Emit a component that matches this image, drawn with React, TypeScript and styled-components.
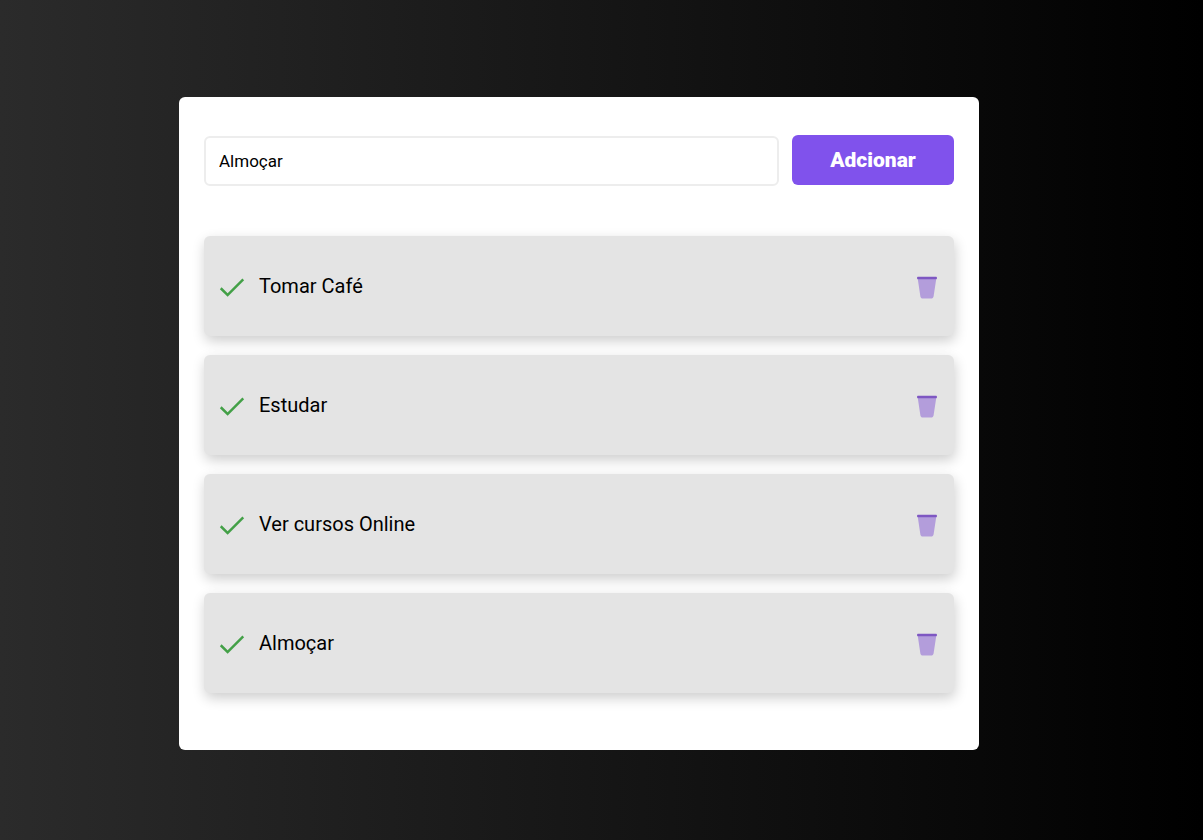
import React, { useState } from 'react';
import styled, { createGlobalStyle } from 'styled-components';
import { FcCheckmark, FcEmptyTrash } from 'react-icons/fc';

const GlobalStyle = createGlobalStyle`
  * {
    box-sizing: border-box;
    margin: 0;
    padding: 0;
  }

  body {
    font-family: Roboto, 'Liberation Sans', sans-serif;
    color: #000000;
  }
`;

const Page = styled.main`
  min-height: 100vh;
  display: flex;
  align-items: center;
  justify-content: center;
  padding: 32px 69px 25px 24px;
  background: linear-gradient(90deg, #2b2b2b 0%, #000000 100%);
`;

const Card = styled.section`
  width: 100%;
  max-width: 800px;
  padding: 38px 25px 57px;
  border-radius: 6px;
  background: #ffffff;
`;

const TaskForm = styled.form`
  display: flex;
  align-items: baseline;
  gap: 13px;
  margin-bottom: 50px;
`;

const TaskInput = styled.input`
  flex: 1;
  min-width: 0;
  height: 50px;
  padding: 0 13px;
  border: 2px solid #ededed;
  border-radius: 6px;
  outline: none;
  background: #ffffff;
  color: #000000;
  font-family: inherit;
  font-size: 17px;
`;

const AddButton = styled.button`
  width: 162px;
  height: 50px;
  border: none;
  border-radius: 6px;
  background: #8052ec;
  color: #ffffff;
  font-family: inherit;
  font-size: 21px;
  font-weight: 900;
  cursor: pointer;
`;

const TaskList = styled.ul`
  display: flex;
  flex-direction: column;
  gap: 19px;
  list-style: none;
`;

const TaskItem = styled.li<{ $done: boolean }>`
  display: flex;
  align-items: center;
  gap: 12px;
  height: 100px;
  padding: 0 12px 0 13px;
  border-radius: 6px;
  background: ${({ $done }) => ($done ? '#e8ff8b' : '#e4e4e4')};
  box-shadow: 1px 5px 13px rgba(0, 0, 0, 0.2);
`;

const TaskName = styled.span`
  flex: 1;
  font-size: 20px;
  line-height: 24px;
`;

const IconButton = styled.button`
  display: flex;
  border: none;
  background: none;
  font-size: 30px;
  cursor: pointer;
`;

type Task = { id: number; name: string; done: boolean };

const initialTasks: Task[] = [
  { id: 1, name: 'Tomar Café', done: false },
  { id: 2, name: 'Estudar', done: false },
  { id: 3, name: 'Ver cursos Online', done: false },
  { id: 4, name: 'Almoçar', done: false },
];

export default function App() {
  const [tasks, setTasks] = useState(initialTasks);
  const [name, setName] = useState('Almoçar');

  const addTask = (event: React.FormEvent) => {
    event.preventDefault();
    if (name.trim()) {
      setTasks([...tasks, { id: Date.now(), name, done: false }]);
    }
  };

  const toggleTask = (id: number) =>
    setTasks(tasks.map((task) => (task.id === id ? { ...task, done: !task.done } : task)));

  const removeTask = (id: number) => setTasks(tasks.filter((task) => task.id !== id));

  return (
    <>
      <GlobalStyle />
      <Page>
        <Card>
          <TaskForm onSubmit={addTask}>
            <TaskInput
              type="text"
              aria-label="Tarefa"
              value={name}
              onChange={(event) => setName(event.target.value)}
            />
            <AddButton type="submit">Adcionar</AddButton>
          </TaskForm>
          <TaskList>
            {tasks.map((task) => (
              <TaskItem key={task.id} $done={task.done}>
                <IconButton type="button" aria-label="Concluir" onClick={() => toggleTask(task.id)}>
                  <FcCheckmark />
                </IconButton>
                <TaskName>{task.name}</TaskName>
                <IconButton type="button" aria-label="Remover" onClick={() => removeTask(task.id)}>
                  <FcEmptyTrash />
                </IconButton>
              </TaskItem>
            ))}
          </TaskList>
        </Card>
      </Page>
    </>
  );
}
